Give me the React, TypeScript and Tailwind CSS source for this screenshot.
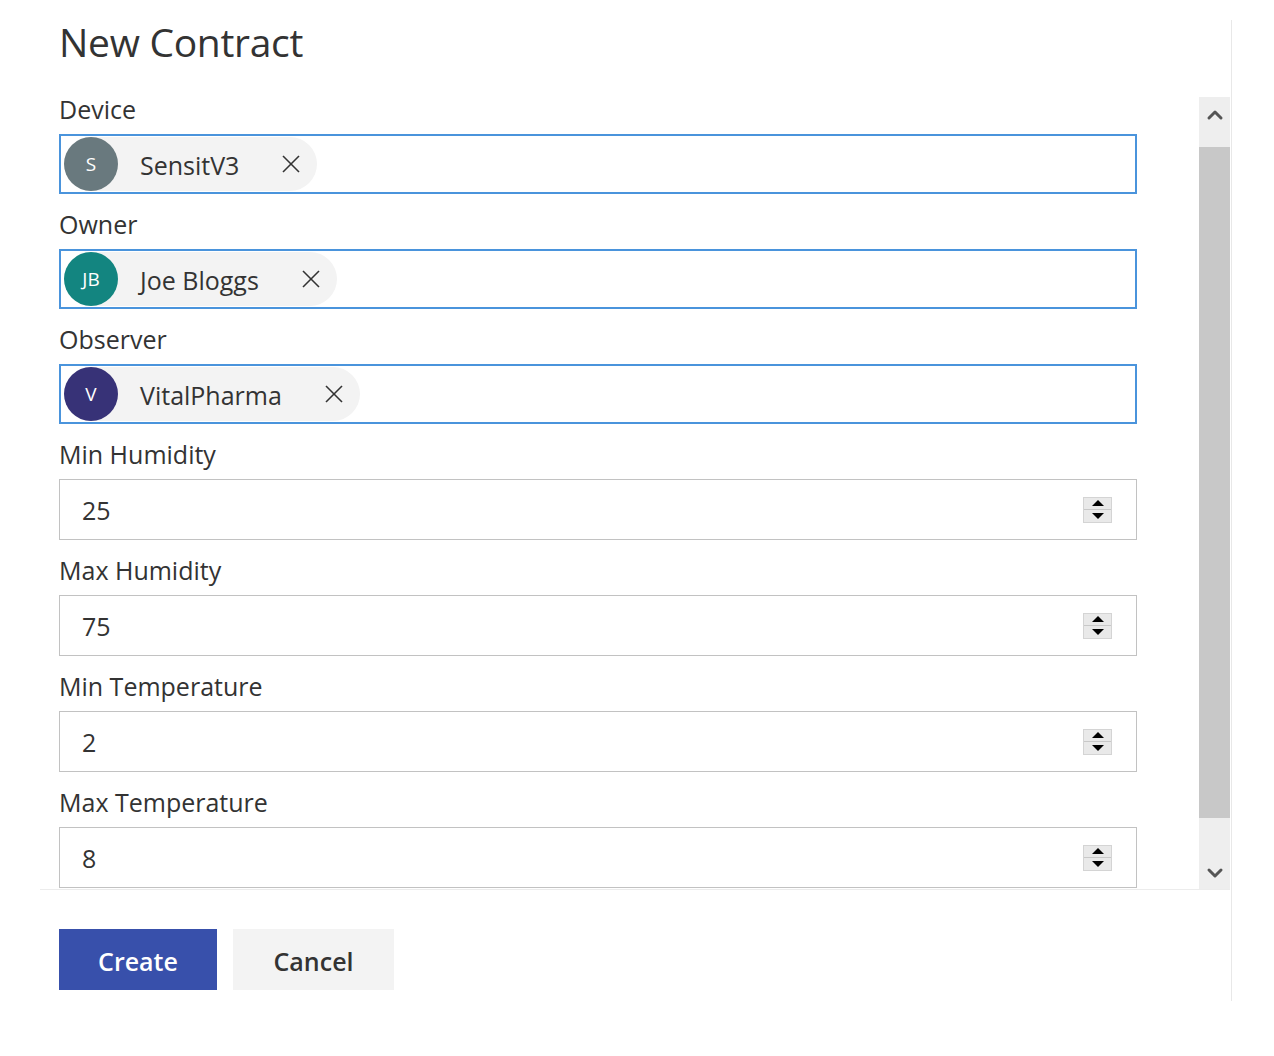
import { ChevronUp, ChevronDown } from "lucide-react";

interface Persona {
  label: string;
  initials: string;
  name: string;
  color: string;
}

interface NumberField {
  label: string;
  value: string;
}

const personas: Persona[] = [
  { label: "Device", initials: "S", name: "SensitV3", color: "bg-[#69797e]" },
  { label: "Owner", initials: "JB", name: "Joe Bloggs", color: "bg-[#138580]" },
  { label: "Observer", initials: "V", name: "VitalPharma", color: "bg-[#373277]" },
];

const numbers: NumberField[] = [
  { label: "Min Humidity", value: "25" },
  { label: "Max Humidity", value: "75" },
  { label: "Min Temperature", value: "2" },
  { label: "Max Temperature", value: "8" },
];

function Spinner() {
  return (
    <div className="flex h-[26px] w-[29px] flex-col border border-[#d4d4d4] bg-[#e9e9e9]">
      <div className="flex flex-1 items-center justify-center border-b border-[#c8c8c8]">
        <div className="h-0 w-0 border-x-[6px] border-b-[6px] border-x-transparent border-b-black" />
      </div>
      <div className="flex flex-1 items-center justify-center">
        <div className="h-0 w-0 border-x-[6px] border-t-[6px] border-x-transparent border-t-black" />
      </div>
    </div>
  );
}

function CloseIcon() {
  return (
    <svg width="20" height="20" viewBox="0 0 20 20" fill="none" stroke="#333" strokeWidth="1.6">
      <line x1="2" y1="2" x2="18" y2="18" />
      <line x1="18" y1="2" x2="2" y2="18" />
    </svg>
  );
}

export default function App() {
  return (
    <div className="min-h-[1056px] bg-white font-['Open_Sans',sans-serif] text-[#333]">
      <div className="ml-[40px] pt-[20px]">
        <div className="flex h-[981px] w-[1192px] flex-col border-r border-[#e8e8e8]">
          {/* Title */}
          <h1 className="pl-[19px] text-[39px] leading-[44px] font-normal tracking-[-0.3px]">New Contract</h1>

          {/* Scroll area */}
          <div className="mt-[27px] flex h-[798px] w-[1190px]">
            <div className="flex-1 overflow-hidden pt-[4px] pl-[19px]">
              <div className="flex w-[1078px] flex-col gap-[16px]">
                {personas.map((p) => (
                  <div key={p.label} className="flex flex-col gap-[11px]">
                    <label className="text-[25px] leading-[28px]">{p.label}</label>
                    <div className="flex h-[60px] items-center border-2 border-[#4a94dc] pl-[3px]">
                      <div className="flex h-[54px] items-center rounded-full bg-[#f3f3f3] pr-[16px]">
                        <div
                          className={`flex h-[54px] w-[54px] items-center justify-center rounded-full text-[19px] text-white ${p.color}`}
                        >
                          {p.initials}
                        </div>
                        <span className="mt-[3px] ml-[22px] mr-[42px] text-[25px]">{p.name}</span>
                        <CloseIcon />
                      </div>
                    </div>
                  </div>
                ))}
                {numbers.map((n) => (
                  <div key={n.label} className="flex flex-col gap-[11px]">
                    <label className="text-[25px] leading-[28px]">{n.label}</label>
                    <div className="flex h-[61px] items-center justify-between border-[1.5px] border-[#c2c2c2] pr-[24px] pl-[22px]">
                      <span className="mt-[2px] text-[25px]">{n.value}</span>
                      <Spinner />
                    </div>
                  </div>
                ))}
              </div>
            </div>

            {/* Scrollbar */}
            <div className="mt-[6px] flex w-[31px] flex-col bg-[#eeeeee]">
              <div className="flex h-[50px] items-start justify-center pt-[6px] text-[#555]">
                <ChevronUp size={24} strokeWidth={3} />
              </div>
              <div className="h-[671px] bg-[#c8c8c8]" />
              <div className="flex flex-1 items-end justify-center pb-[4px] text-[#555]">
                <ChevronDown size={24} strokeWidth={3} />
              </div>
            </div>
          </div>

          <div className="h-px w-[1190px] bg-[#ececec]" />

          {/* Actions */}
          <div className="mt-[39px] flex gap-[16px] pl-[19px]">
            <button className="h-[61px] w-[158px] bg-[#3850ab] pt-[4px] text-[25px] font-semibold text-white">
              Create
            </button>
            <button className="h-[61px] w-[161px] bg-[#f3f3f3] pt-[4px] text-[25px] font-semibold text-[#333]">
              Cancel
            </button>
          </div>
        </div>
      </div>
    </div>
  );
}
